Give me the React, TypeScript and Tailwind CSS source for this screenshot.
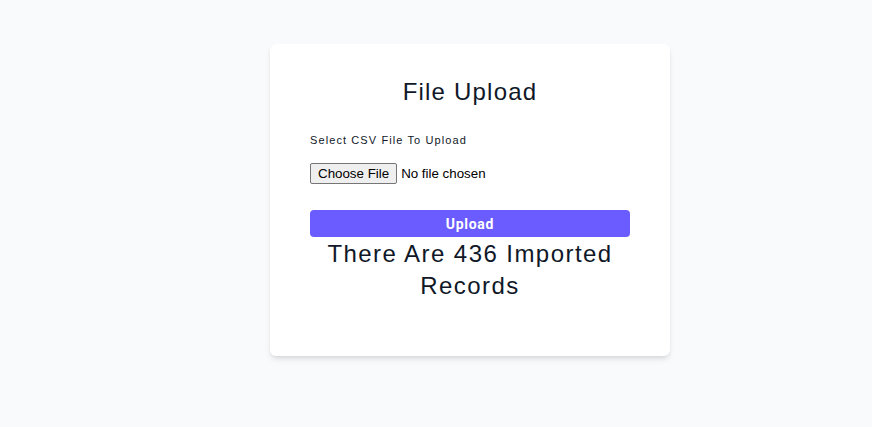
export default function App() {
  return (
    <div className="min-h-screen bg-gray-50 pt-[44px] pl-[270px]" style={{ fontFamily: '"Liberation Sans", Arial, sans-serif' }}>
      <div className="w-[400px] bg-white rounded-md shadow-md px-10 pt-[32px] pb-[54px] text-gray-900">
        <h1 className="text-2xl tracking-wider text-center">File Upload</h1>
        <label className="block mt-[24px] text-[11px] leading-4 tracking-widest">Select CSV File To Upload</label>
        <input
          type="file"
          className="block mt-[15px] text-[13.33px] leading-[15px] text-black file:mr-1 file:px-[7px] file:py-[2px] file:border file:border-solid file:border-[#767676] file:bg-[#efefef] file:rounded-[2px] file:text-black"
          style={{ fontFamily: 'Arial, "Liberation Sans", sans-serif' }}
        />
        <button
          className="mt-[26px] w-full h-[27px] rounded bg-[#6a5cff] text-white text-sm font-bold tracking-wider"
          style={{ fontFamily: 'Roboto, sans-serif' }}
        >
          Upload
        </button>
        <p className="mt-px text-2xl tracking-[0.06em] text-center">There Are 436 Imported Records</p>
      </div>
    </div>
  )
}
